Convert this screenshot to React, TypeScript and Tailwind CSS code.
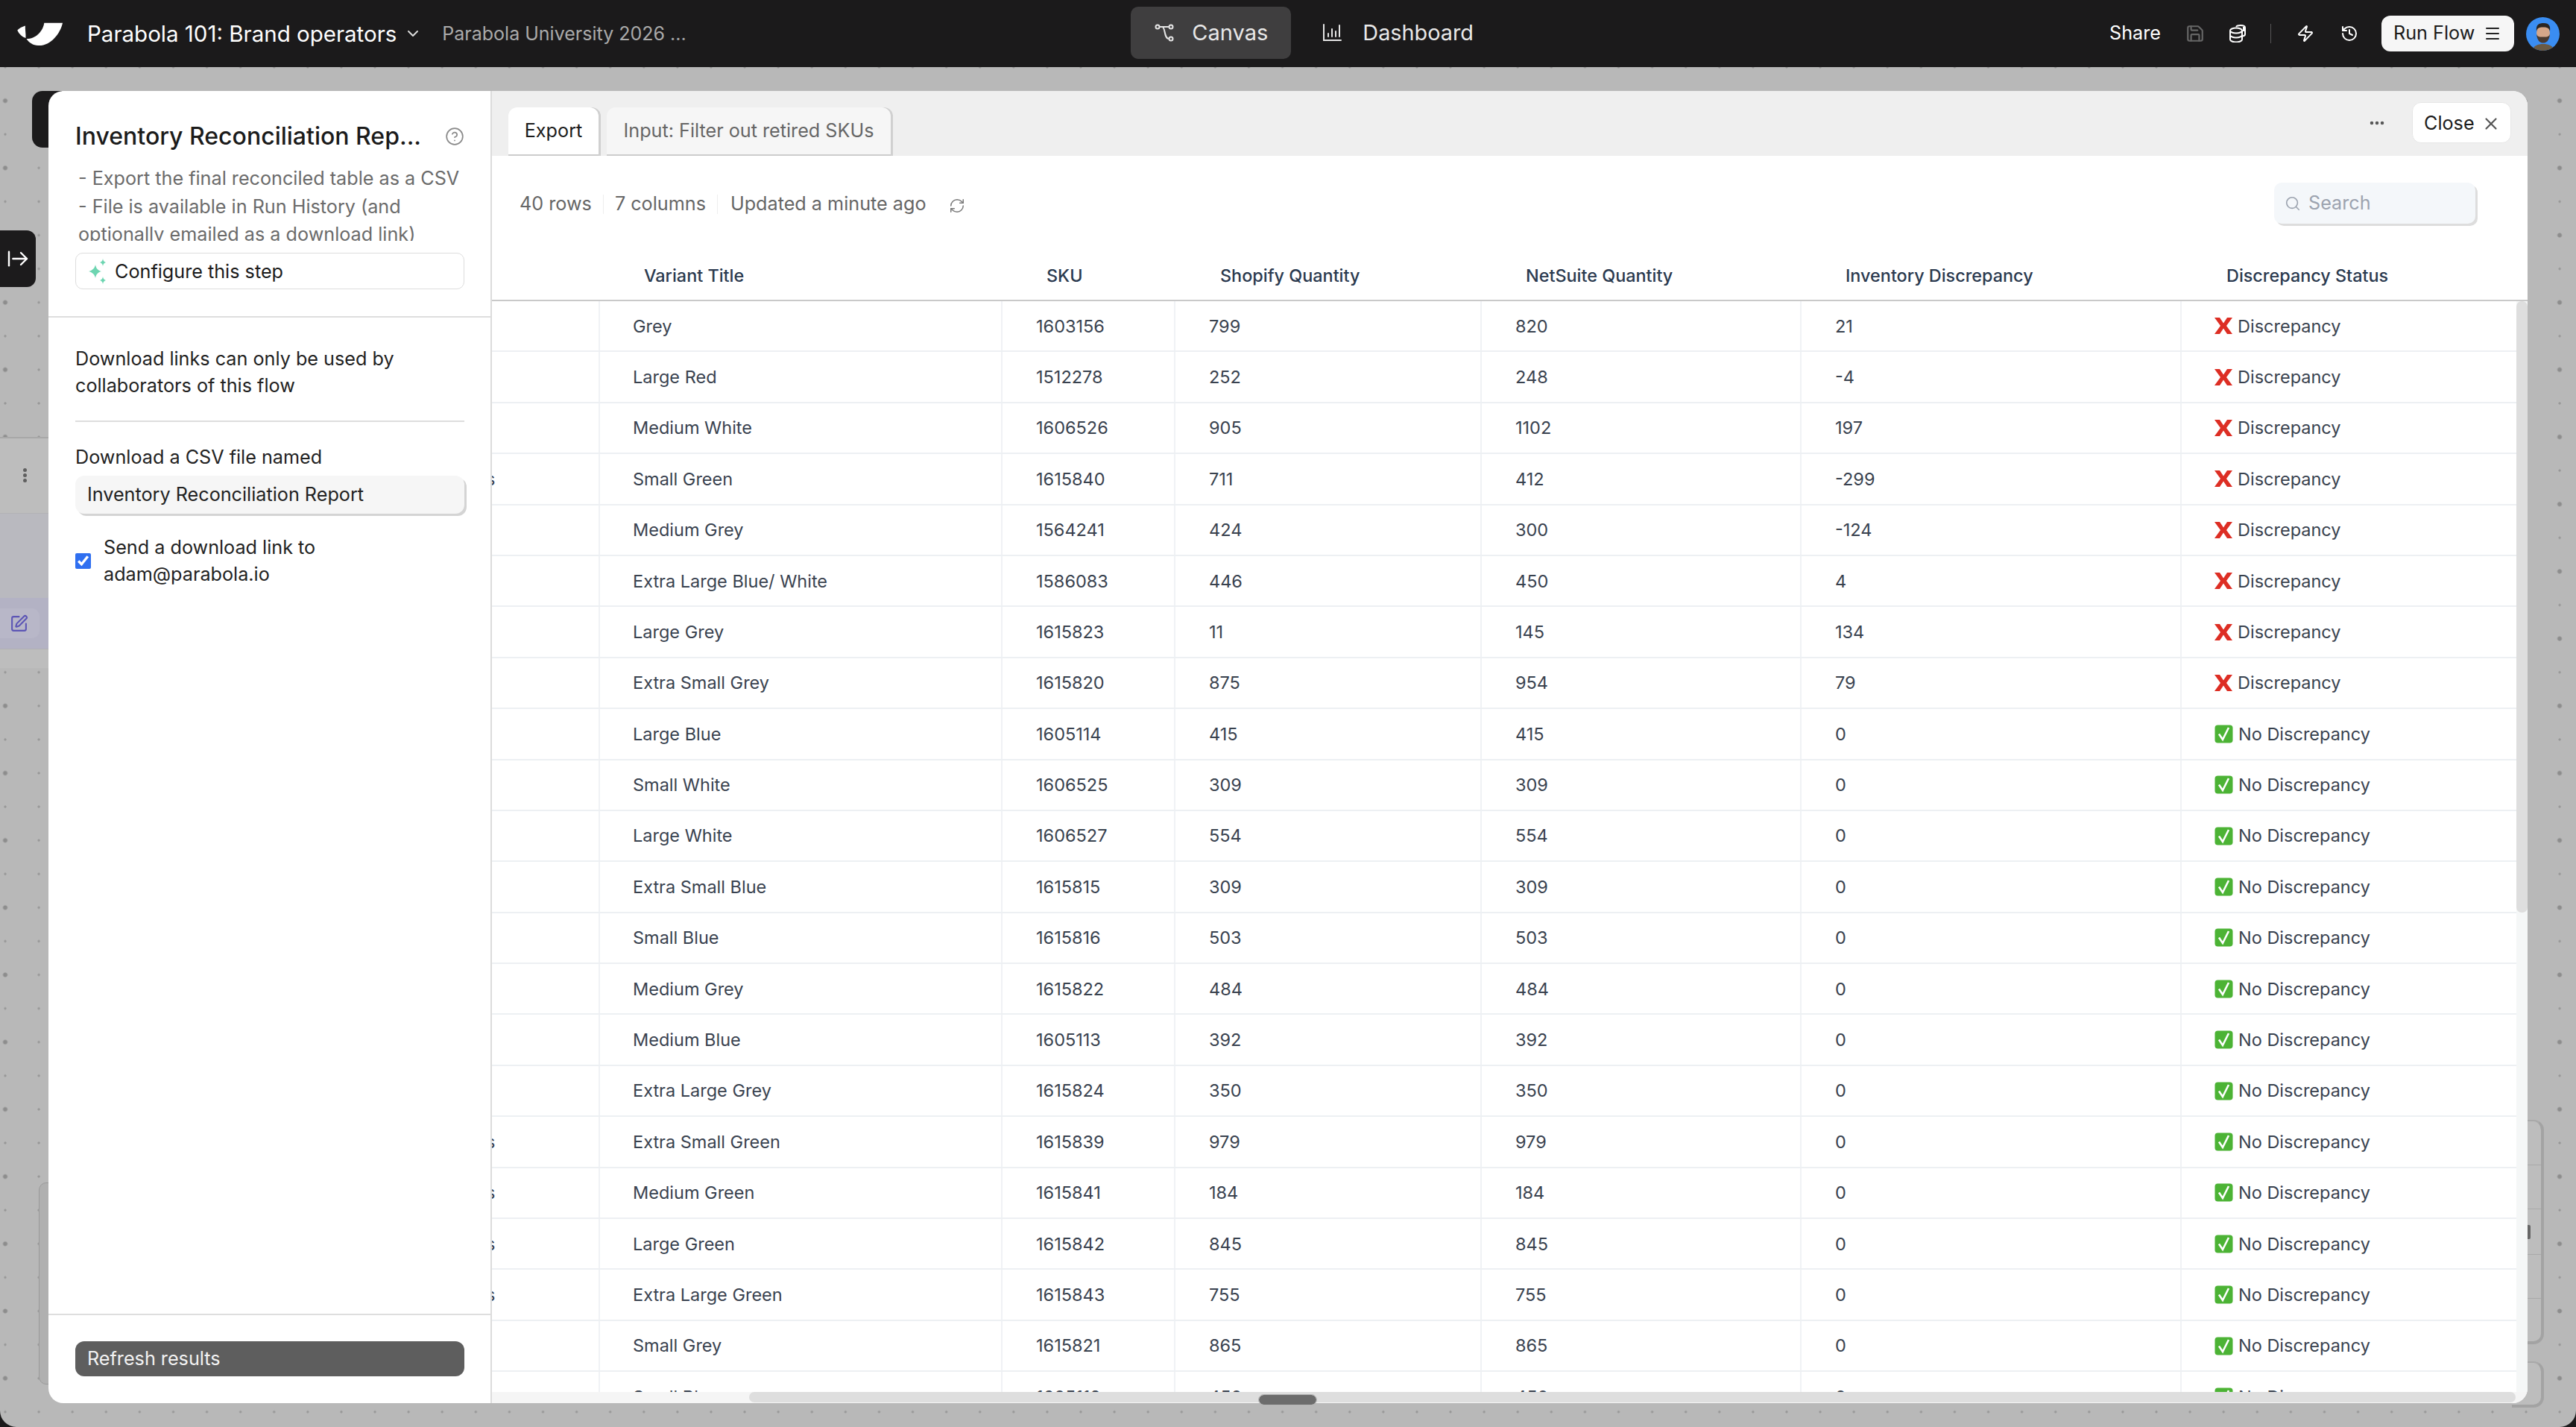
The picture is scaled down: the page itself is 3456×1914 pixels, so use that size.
import { ArrowRightFromLine, ChevronDown, CircleHelp, Ellipsis, History, Menu, RefreshCw, Save, Search, SquarePen, X, Zap } from "lucide-react";

const rows: [string, string, string, string, string, boolean, boolean][] = [
  ["Grey", "1603156", "799", "820", "21", true, false],
  ["Large Red", "1512278", "252", "248", "-4", true, false],
  ["Medium White", "1606526", "905", "1102", "197", true, false],
  ["Small Green", "1615840", "711", "412", "-299", true, true],
  ["Medium Grey", "1564241", "424", "300", "-124", true, false],
  ["Extra Large Blue/ White", "1586083", "446", "450", "4", true, false],
  ["Large Grey", "1615823", "11", "145", "134", true, false],
  ["Extra Small Grey", "1615820", "875", "954", "79", true, false],
  ["Large Blue", "1605114", "415", "415", "0", false, false],
  ["Small White", "1606525", "309", "309", "0", false, false],
  ["Large White", "1606527", "554", "554", "0", false, false],
  ["Extra Small Blue", "1615815", "309", "309", "0", false, false],
  ["Small Blue", "1615816", "503", "503", "0", false, false],
  ["Medium Grey", "1615822", "484", "484", "0", false, false],
  ["Medium Blue", "1605113", "392", "392", "0", false, false],
  ["Extra Large Grey", "1615824", "350", "350", "0", false, false],
  ["Extra Small Green", "1615839", "979", "979", "0", false, true],
  ["Medium Green", "1615841", "184", "184", "0", false, true],
  ["Large Green", "1615842", "845", "845", "0", false, true],
  ["Extra Large Green", "1615843", "755", "755", "0", false, true],
  ["Small Grey", "1615821", "865", "865", "0", false, false],
  ["Small Blue", "1605112", "450", "450", "0", false, false],
];

const headers: [string, string][] = [
  ["", ""],
  ["Variant Title", "pl-[59px]"],
  ["SKU", "pl-[59px]"],
  ["Shopify Quantity", "pl-[60px]"],
  ["NetSuite Quantity", "pl-[59px]"],
  ["Inventory Discrepancy", "pl-[59px]"],
  ["Discrepancy Status", "pl-[60px]"],
];

function Logo() {
  return (
    <svg viewBox="60 90 195 100" className="w-[65px] h-[33px] shrink-0" fill="#fff">
      <path d="M175 95 L250 95 C240 140 200 190 150 187 C130 187 112 175 103 160 C140 160 170 130 175 95 Z" />
      <path d="M98 107 C85 111 73 118 66 125 C72 140 85 152 100 157 C101 140 97 122 98 107 Z" />
    </svg>
  );
}

function CanvasIcon() {
  return (
    <svg viewBox="0 0 26 24" className="w-[26px] h-[24px]" fill="none" stroke="#e5e5e5" strokeWidth="2">
      <circle cx="4" cy="4" r="2.5" />
      <circle cx="22" cy="4" r="2.5" />
      <circle cx="22" cy="20" r="2.5" />
      <path d="M6.5 4H19.5M10 4C15 4 12 20 19.5 20" />
    </svg>
  );
}

function DashIcon() {
  return (
    <svg viewBox="0 0 26 26" className="w-[26px] h-[26px]" fill="none" stroke="#e5e5e5" strokeWidth="2" strokeLinecap="round">
      <path d="M2 2V23H25M8 18V14M13 18V8M18 18V11M23 18V3" />
    </svg>
  );
}

function DbIcon() {
  return (
    <svg viewBox="0 0 24 24" className="w-[24px] h-[24px]" fill="none" stroke="#fff" strokeWidth="2">
      <ellipse cx="10" cy="8" rx="8" ry="3.5" />
      <path d="M2 8V20C2 22 6 23.5 10 23.5S18 22 18 20V8M2 14C2 16 6 17.5 10 17.5S18 16 18 14" />
      <path d="M10 3C11 1.5 14 1 16 1C19.5 1 22 2.2 22 4V13C22 14 21 15 19 15.5M20 3V9" />
    </svg>
  );
}

function Sparkle() {
  return (
    <svg viewBox="0 0 26 34" className="w-[26px] h-[34px] shrink-0" fill="#6dd5b1">
      <path d="M10 8C11 13 13 15.500 18 17C13 18.500 11 21 10 26C9 21 6 18.500 1 17C6 15.500 9 13 10 8Z" />
      <path d="M20 0C20.500 3 21.500 4 24 5C21.500 6 20.500 7 20 10C19.500 7 18.500 6 16 5C18.500 4 19.500 3 20 0Z" />
      <path d="M20 24C20.500 27 21.500 28 24 29C21.500 30 20.500 31 20 34C19.500 31 18.500 30 16 29C18.500 28 19.500 27 20 24Z" />
    </svg>
  );
}

function Avatar() {
  return (
    <svg viewBox="0 0 45 45" className="w-[45px] h-[45px] shrink-0 ml-[16px]">
      <defs>
        <clipPath id="av"><circle cx="22.500" cy="22.500" r="22.500" /></clipPath>
      </defs>
      <g clipPath="url(#av)">
        <rect width="45" height="45" fill="#3a8df2" />
        <path d="M8 45C10 38 16 36 23 36S36 38 38 45Z" fill="#6a5a44" />
        <ellipse cx="23" cy="21" rx="9" ry="11.500" fill="#d6a789" />
        <path d="M14 19C13 10 17 8 24 8C31 8 33 12 32 19C31 15 29 13.500 23 13.500S15 15 14 19Z" fill="#2b2522" />
        <path d="M14 23C15 32 19 34.500 23 34.500S31 32 32 23C30 27 27 26.500 23 26.500S16 27 14 23Z" fill="#4a3a30" />
      </g>
    </svg>
  );
}

function RedX() {
  return (
    <svg viewBox="0 0 24 24" className="w-[24px] h-[24px] shrink-0">
      <path d="M0 1H7L12 8.500L17 1H24L16 12L24 23H17L12 15.500L7 23H0L8 12Z" fill="#dd2e24" />
    </svg>
  );
}

function GreenCheck() {
  return (
    <svg viewBox="0 0 25 25" className="w-[25px] h-[25px] shrink-0">
      <rect x="0.500" y="0.500" width="24" height="24" rx="4" fill="#4cb335" />
      <path d="M6 12.500L11 20L19 4" fill="none" stroke="#fff" strokeWidth="2.600" />
    </svg>
  );
}

function CanvasBits() {
  return (
    <>
      <div className="absolute left-[43px] top-[32px] w-[40px] h-[76px] rounded-l-[14px] bg-[#1c1b1c]" />
      <div className="absolute left-0 top-[219px] w-[48px] h-[76px] rounded-r-[12px] bg-[#1c1b1c] flex items-center justify-center z-20">
        <ArrowRightFromLine className="w-[32px] h-[32px] text-white" strokeWidth={1.8} />
      </div>
      <div className="absolute left-0 top-[496px] w-[80px] flex flex-col border-t-2 border-[#a8a8a8]">
        <div className="h-[100px] bg-[#bdbdbd]">
          <div className="ml-[31px] mt-[40px] w-[6px] flex flex-col gap-[2px]">
            <div className="w-[5px] h-[5px] rounded-full bg-[#5f5f5f]" />
            <div className="w-[5px] h-[5px] rounded-full bg-[#5f5f5f]" />
            <div className="w-[5px] h-[5px] rounded-full bg-[#5f5f5f]" />
          </div>
        </div>
        <div className="h-[114px] bg-[#b9b9bf] border-t border-[#b2b2b6]" />
        <div className="h-[68px] bg-[#b3b2c4] flex items-center">
          <div className="w-[53px] h-[40px] rounded-r-[10px] bg-[#b8b7c8] flex items-center justify-end pr-[15px]">
            <SquarePen className="w-[25px] h-[25px] text-[#5c55b5]" strokeWidth={2} />
          </div>
        </div>
        <div className="h-[26px] bg-[#bdbdbd] border-t border-[#b0b0b4]" />
      </div>
      <div className="absolute left-[52px] top-[1496px] w-[30px] h-[271px] rounded-l-[10px] border border-[#9b9b9b] bg-[#b0b0b0]" />
      <div className="absolute left-[3370px] top-[1412px] w-[43px] h-[301px] rounded-br-[14px] rounded-tr-[14px] bg-[#bdbdbd] border-t-2 border-t-[#a9a9a9] border-r-[4px] border-b-[4px] border-[#a3a3a3] flex flex-col">
        <div className="h-[59px] border-b border-[#a9a9a9]" />
        <div className="h-[59px] border-b border-[#a9a9a9]" />
        <div className="h-[61px] border-b border-[#a9a9a9] flex items-center justify-start pl-[21px]">
          <div className="w-[4px] h-[19px] rounded-r-[2px] bg-[#666]" />
        </div>
        <div className="h-[59px] border-b border-[#a9a9a9]" />
      </div>
      <div className="absolute left-[3370px] top-[1736px] w-[43px] h-[62px] rounded-r-[14px] bg-[#bdbdbd] border-t-2 border-t-[#a9a9a9] border-r-[4px] border-b-[4px] border-[#a3a3a3]" />
    </>
  );
}

export default function App() {
  return (
    <div className="relative w-[3456px] h-[1914px] flex flex-col overflow-hidden bg-[#1b1a1b] font-['Inter',sans-serif]">
      <header className="h-[90px] shrink-0 bg-[#1b1a1b] flex items-center pl-[21px] pr-[22px] text-white">
        <Logo />
        <div className="ml-[31px] text-[29.500px] leading-[36px] whitespace-nowrap text-white">Parabola 101: Brand operators</div>
        <ChevronDown className="ml-[10px] w-[24px] h-[24px] text-[#ddd]" strokeWidth={2} />
        <div className="ml-[27px] text-[25px] leading-[36px] text-[#aaaaaa] whitespace-nowrap w-[340px]">Parabola University 2026 ...</div>
        <nav className="ml-[584px] flex items-center h-[70px] mt-[-2px]">
          <div className="h-[70px] w-[215px] rounded-[10px] bg-[#3f3e3f] flex items-center pl-[32px] gap-[24px]">
            <CanvasIcon />
            <span className="text-[29px] text-[#e8e8e8]">Canvas</span>
          </div>
          <div className="h-[70px] flex items-center pl-[42px] gap-[28px]">
            <DashIcon />
            <span className="text-[28.800px] text-[#e8e8e8]">Dashboard</span>
          </div>
        </nav>
        <div className="ml-auto flex items-center">
          <span className="text-[25.200px] text-white">Share</span>
          <Save className="ml-[33px] w-[26px] h-[26px] text-[#666]" strokeWidth={2} />
          <div className="ml-[32px]"><DbIcon /></div>
          <div className="ml-[32px] w-[1px] h-[26px] bg-[#555]" />
          <Zap className="ml-[34px] w-[24px] h-[24px] text-white" strokeWidth={2} />
          <History className="ml-[35px] w-[24px] h-[24px] text-white" strokeWidth={2} />
          <div className="ml-[31px] w-[178px] h-[48px] rounded-[12px] bg-[#f6f6f6] flex items-center justify-between pl-[16px] pr-[17px] text-[25.200px] text-[#1b1b1b]">
            <span>Run Flow</span>
            <Menu className="w-[24px] h-[24px] text-[#222]" strokeWidth={2} />
          </div>
          <Avatar />
        </div>
      </header>

      <main className="relative flex-1 rounded-b-[22px] overflow-hidden bg-[#b8b8b8] bg-[image:radial-gradient(circle,#8d8d8d_2.5px,transparent_3.5px),radial-gradient(circle,#969696_1.2px,transparent_2px)] bg-[size:3427px_90.2px,45.1px_45.1px] bg-[position:-1706.5px_0px,-15.55px_-22.55px]">
        <CanvasBits />
        <div className="absolute left-[65px] top-[32px] w-[3326px] h-[1760px] flex z-10">
          <aside className="w-[595px] shrink-0 bg-white rounded-l-[20px] flex flex-col border-r-2 border-[#dcdcdc]">
            <section className="h-[304px] shrink-0 pl-[36px] pr-[35px] pt-[41px] border-b-2 border-[#dedede]">
              <div className="flex items-center justify-between h-[40px]">
                <span className="text-[32px] font-medium text-[#1b1b1b] whitespace-nowrap">Inventory Reconciliation Rep...</span>
                <CircleHelp className="w-[26px] h-[26px] text-[#8a8a8a]" strokeWidth={1.6} />
              </div>
              <div className="mt-[18px] pl-[4px] h-[102px] overflow-hidden text-[25.200px] leading-[37.500px] text-[#6b6b6b] whitespace-nowrap">
                <div>- Export the final reconciled table as a CSV</div>
                <div>- File is available in Run History (and</div>
                <div>optionally emailed as a download link)</div>
              </div>
              <div className="mt-[16px] h-[49px] rounded-[10px] border border-[#dddddd] flex items-center pl-[16px] gap-[10px] text-[25.200px] text-[#1b1b1b]">
                <Sparkle />
                <span className="mt-[2px]">Configure this step</span>
              </div>
            </section>
            <section className="flex-1 pl-[36px] pr-[35px] pt-[37px] text-[25.200px] leading-[36px] text-[#222]">
              <p>Download links can only be used by collaborators of this flow</p>
              <div className="mt-[29px] h-[2px] bg-[#dedede]" />
              <div className="mt-[29px]">Download a CSV file named</div>
              <div className="mt-[7px] h-[51px] rounded-[12px] bg-[#f6f6f6] shadow-[3px_3px_0_#d4d4d4] flex items-center pl-[16px] pb-[2px]">Inventory Reconciliation Report</div>
              <label className="mt-[27px] flex items-center gap-[17px]">
                <input type="checkbox" defaultChecked className="w-[21px] h-[21px] accent-[#2f6ff0] shrink-0" />
                <span>Send a download link to<br />adam@parabola.io</span>
              </label>
            </section>
            <section className="h-[120px] shrink-0 border-t-2 border-[#dedede] pl-[36px] pr-[35px] pt-[35px]">
              <div className="h-[47px] rounded-[12px] bg-[#5e5e5e] flex items-center pl-[16px] text-[25.200px] text-[#f2f2f2]">Refresh results</div>
            </section>
          </aside>

          <div className="flex-1 min-w-0 flex flex-col rounded-r-[20px] overflow-hidden bg-white">
            <div className="h-[87px] shrink-0 bg-[#efefef] flex items-end pl-[22px] pr-[22px] pb-0 relative">
              <div className="h-[65px] w-[121px] rounded-t-[12px] bg-white border-b-2 border-[#cccccc] shadow-[3px_0_0_#d0d0d0] flex items-center justify-center text-[25.200px] text-[#1b1b1b]">Export</div>
              <div className="ml-[11px] h-[65px] w-[381px] rounded-t-[12px] bg-[#f6f6f6] border-b-2 border-[#cccccc] shadow-[3px_0_0_#d0d0d0] flex items-center justify-center text-[25.200px] text-[#666] whitespace-nowrap">Input: Filter out retired SKUs</div>
              <div className="ml-auto self-start mt-[15px] flex items-center">
                <Ellipsis className="w-[24px] h-[24px] text-[#555]" strokeWidth={2.500} />
                <div className="ml-[35px] w-[133px] h-[55px] rounded-[12px] bg-white border border-[#e6e6e6] flex items-center justify-between pl-[15px] pr-[13px] pt-[2px] text-[25.200px] text-[#1b1b1b]">
                  <span>Close</span>
                  <X className="w-[26px] h-[26px] text-[#555]" strokeWidth={2} />
                </div>
              </div>
            </div>

            <div className="h-[128px] shrink-0 flex items-center pl-[37px] pr-[70px] pt-[2px] text-[25.200px] text-[#666] whitespace-nowrap">
              <span>40 rows</span>
              <div className="mx-[15px] w-[1px] h-[26px] bg-[#eeeeee]" />
              <span>7 columns</span>
              <div className="ml-[15px] mr-[17px] w-[1px] h-[26px] bg-[#eeeeee]" />
              <span>Updated a minute ago</span>
              <RefreshCw className="ml-[30px] mt-[4px] w-[22px] h-[22px] text-[#777]" strokeWidth={1.6} />
              <div className="ml-auto mt-[-4px] w-[270px] h-[55px] rounded-[10px] bg-[#f4f7fa] shadow-[3px_3px_0_#dddddd] flex items-center pl-[14px] pt-[2px] gap-[10px] text-[#9ca3af]">
                <Search className="w-[22px] h-[22px]" strokeWidth={1.8} />
                <span>Search</span>
              </div>
            </div>

            <div className="h-[67px] shrink-0 grid grid-cols-[145px_540px_232px_411px_429px_510px_449px_15px] items-center border-b-2 border-[#c9c9c9] text-[23.400px] font-medium text-[#2b3a4f] whitespace-nowrap">
              {headers.map(([h, p], i) => (
                <div key={i} className={p}>{h}</div>
              ))}
            </div>

            <div className="flex-1 min-h-0 flex">
              <div className="w-[2716px] shrink-0 overflow-hidden">
                {rows.map((r, i) => (
                  <div key={i} className="h-[68.400px] grid grid-cols-[145px_540px_232px_411px_429px_510px_449px] border-b-2 border-[#edf0f3] text-[23.500px] text-[#39424f] whitespace-nowrap">
                    <div className="flex items-center border-r-2 border-[#f0f2f5] overflow-hidden">
                      {r[6] && <span className="-ml-[8px]">s</span>}
                    </div>
                    <div className="flex items-center pl-[44px] border-r-2 border-[#f0f2f5]">{r[0]}</div>
                    <div className="flex items-center pl-[45px] border-r-2 border-[#f0f2f5]">{r[1]}</div>
                    <div className="flex items-center pl-[45px] border-r-2 border-[#f0f2f5]">{r[2]}</div>
                    <div className="flex items-center pl-[45px] border-r-2 border-[#f0f2f5]">{r[3]}</div>
                    <div className="flex items-center pl-[45px] border-r-2 border-[#f0f2f5]">{r[4]}</div>
                    <div className="flex items-center pl-[44px] gap-[7px]">
                      {r[5] ? <RedX /> : <GreenCheck />}
                      <span>{r[5] ? "Discrepancy" : "No Discrepancy"}</span>
                    </div>
                  </div>
                ))}
              </div>
              <div className="flex-1 bg-[#f5f7f7]">
                <div className="h-[820px] rounded-[7px] bg-[#dedede]" />
              </div>
            </div>

            <div className="h-[15px] shrink-0 bg-[#f5f5f5] pl-[345px] pr-[16px] pb-[1px]">
              <div className="h-[14px] rounded-[7px] bg-[#dedede]" />
            </div>
          </div>

          <div className="absolute left-[1624px] top-[1749px] w-[77px] h-[13px] rounded-[7px] bg-[#6c6c6c] outline outline-[#b5b5b5]" />
        </div>
      </main>
    </div>
  );
}
